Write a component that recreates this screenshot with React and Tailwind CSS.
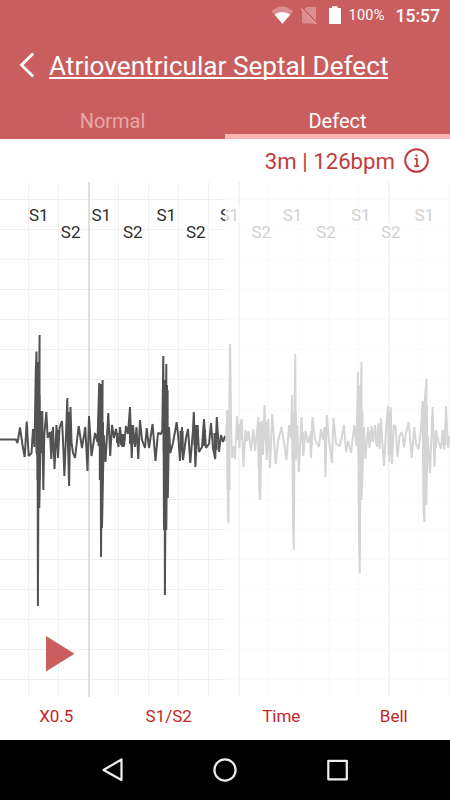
const MURMUR = [
	[0, 439.5], [16, 439.5], [17.5, 443], [20, 427.5], [22.5, 445], [24.7, 457], [26.7, 421.5], [28.7, 456], [31.5, 453], [33, 429],
	[34.5, 447], [35.8, 370], [36.5, 351.5], [37, 455], [37.5, 362], [37.9, 606], [38.6, 440], [39.6, 335], [39.3, 508], [41, 411],
	[41.8, 452], [42.3, 411], [43.3, 490], [44.3, 435], [46.3, 412], [47.7, 438], [50, 432], [51.3, 459], [53, 427], [54.5, 469],
	[56.5, 425], [58, 458], [59.5, 428], [62, 421], [63, 440], [64.4, 476], [66.2, 430], [67.3, 398], [68, 445], [69.1, 486],
	[70.5, 407], [71.5, 442], [73, 453], [75, 458], [78.7, 426], [82, 448], [85.3, 427], [87.5, 471], [89, 416], [91.5, 456],
	[95, 433], [97.5, 442], [99.2, 383], [100, 450], [100.6, 384], [101, 557], [102.6, 380], [102, 528], [103.8, 435], [105.5, 462],
	[108.3, 413], [110.2, 456], [112, 425], [114, 438], [116, 429], [118.5, 447], [120, 427], [122, 446], [124, 446], [126, 426],
	[128, 434], [130, 407], [131.7, 458], [133, 425], [135, 447], [136.5, 427], [138.3, 459], [140, 420], [142, 440], [145, 448],
	[146.7, 428], [149, 448], [152.6, 424], [155.5, 461], [158, 433], [161, 434], [162.3, 430], [163.3, 356], [164, 530], [164.6, 380],
	[164.9, 595], [166.3, 364], [166.3, 530], [167.6, 390], [167.8, 498], [169, 427], [170.3, 453], [173, 443], [176.7, 422], [178.5, 440],
	[180, 461], [182, 427], [183, 460], [186, 438], [188, 429], [190.3, 463], [193, 430], [193.8, 412], [195.4, 467], [197.5, 425],
	[199, 452], [202, 447], [204, 419], [206, 448], [209, 444], [211, 423], [213, 448], [215.2, 459], [216.8, 417], [219, 452],
	[221, 435], [223, 442], [225, 436], [226.5, 441], [227.2, 410], [227.8, 505], [228.4, 523], [229.2, 409], [230.1, 344], [231.2, 435],
	[232.2, 458], [233.5, 446], [235, 459], [237, 416], [239.5, 448], [240.5, 424], [241.8, 419], [243.4, 467], [245.5, 430], [247, 441],
	[248.5, 431], [251, 451], [253.3, 429], [255, 451], [258.3, 417], [259.3, 490], [260.2, 500], [261.8, 421], [263, 455], [264.5, 405],
	[266.7, 460], [268.3, 419], [270, 468], [272.2, 414], [275.7, 464], [278, 442], [281.5, 427], [284, 442], [286.5, 460], [289, 425],
	[290.8, 438], [292.1, 395], [293, 520], [293.8, 550], [294.7, 400], [295.3, 354], [295.8, 460], [297.3, 425], [298.8, 472], [301.5, 417],
	[303.3, 456], [305.5, 431], [308, 443], [310, 435], [311, 458], [312.5, 417], [315, 440], [319, 447], [321, 429], [323, 440],
	[324.5, 427], [325.4, 477], [326.8, 415], [329, 440], [332, 463], [333.5, 418], [336, 444], [340, 446], [344, 425], [346, 452],
	[348, 441], [351, 453], [354.3, 425], [356.5, 446], [358, 372], [359, 540], [359.8, 573], [360.5, 410], [361.5, 362], [361.5, 500],
	[362.8, 464], [364, 427], [365.5, 459], [368, 427], [369.5, 448], [371.5, 426], [373, 442], [375, 425], [377, 447], [378.3, 423],
	[379.5, 449], [381, 418], [382.5, 445], [384, 466], [386, 430], [388, 406], [389.3, 462], [390.7, 407], [392, 464], [393.8, 425],
	[395.5, 426], [397.5, 457], [399.5, 436], [402, 432], [404, 447], [406, 433], [408.7, 422], [411.7, 458], [414.3, 427], [416, 444],
	[418.5, 449], [421, 430], [422.6, 401], [423.5, 510], [424.5, 522], [424.8, 400], [426.5, 379], [426.3, 505], [427.6, 435], [430, 473],
	[432.6, 407], [434.5, 467], [436, 430], [438.5, 442], [441, 449], [442.5, 430], [444.3, 450], [446, 406], [448, 448], [450, 436],
];

// stretches where the samples are too dense to separate: x1, x2, top, bottom
const DENSE = [
	[35.5, 42.5, 412, 453], [36.5, 40.5, 395, 480], [51, 54, 431, 450], [56.5, 59.5, 430, 441],
	[66.5, 71, 412, 442], [97.5, 104, 422, 446], [98.8, 102.8, 396, 480], [116, 118.5, 433, 443], [120, 124, 434, 445],
	[129, 133.5, 425, 444], [162.8, 169.5, 428, 452], [163.3, 168, 385, 498], [179.5, 183.5, 431, 446],
	[193.5, 198.5, 425, 445], [203, 206, 430, 446], [213.5, 217.5, 433, 450], [226.5, 230.5, 411, 490], [237, 242, 424, 440],
	[257.5, 262, 422, 468], [263.5, 268.5, 422, 440], [291.5, 297, 412, 458], [301.5, 304, 432, 445], [310, 313, 431, 445],
	[357.5, 363.5, 411, 458], [358.3, 361.5, 385, 490], [368, 371.5, 432, 442], [375, 381, 433, 443], [387.5, 391.5, 412, 455],
	[422, 428, 405, 440], [423, 427, 403, 490], [434.5, 437, 434, 448], [442, 446.5, 433, 445],
];

const VERTICALS = [28.5, 58.5, 118.5, 148.5, 178.5, 208.5, 268.5, 298.5, 328.5, 358.5, 418.5, 448.5];
const SECONDS = [89, 239, 389];
const HORIZONTALS = Array.from({ length: 17 }, (_, i) => 199.5 + i * 30);

const PLAYED_LABELS = [
	["S1", 29, 221], ["S1", 91.5, 221], ["S1", 156.5, 221], ["S1", 220, 221],
	["S2", 60.8, 238], ["S2", 123, 238], ["S2", 185.9, 238],
];

const UPCOMING_LABELS = [
	["S1", 219.5, 221], ["S1", 282.7, 221], ["S1", 351, 221], ["S1", 414.5, 221],
	["S2", 251.5, 238], ["S2", 316.2, 238], ["S2", 380.9, 238],
];

const Trace = ({ labels, grid, second, line, text, clip }) => (
	<g clipPath={clip}>
		{HORIZONTALS.map((y) => (
			<line key={y} x1="0" x2="450" y1={y} y2={y} stroke={grid} />
		))}
		{VERTICALS.map((x) => (
			<line key={x} x1={x} x2={x} y1="182" y2="697" stroke={grid} />
		))}
		{SECONDS.map((x) => (
			<line key={x} x1={x} x2={x} y1="182" y2="697" stroke={second} strokeWidth="1.7" />
		))}
		{labels.map(([name, x, y]) => (
			<g key={`${name}-${x}`}>
				<rect x={x} y={y - 15} width="20" height="17" fill="#fff" />
				<text x={x} y={y} fill={text} fontSize="17" fontFamily="Roboto, sans-serif">
					{name}
				</text>
			</g>
		))}
		{DENSE.map(([x1, x2, top, bottom]) => (
			<rect key={`${x1}-${top}`} x={x1} y={top} width={x2 - x1} height={bottom - top} fill={line} />
		))}
		<polyline points={MURMUR.map((p) => p.join(",")).join(" ")} fill="none" stroke={line} strokeWidth="2" strokeLinejoin="bevel" />
	</g>
);

const Phonocardiogram = () => (
	<svg className="block h-[515px] w-[450px]" viewBox="0 182 450 515">
		<defs>
			<clipPath id="played">
				<rect x="0" y="182" width="225.5" height="515" />
			</clipPath>
			<clipPath id="upcoming">
				<rect x="225.5" y="182" width="224.5" height="515" />
			</clipPath>
		</defs>
		<Trace labels={PLAYED_LABELS} grid="#f0f0f0" second="#dadada" line="#525252" text="#2c2c2c" clip="url(#played)" />
		<Trace labels={UPCOMING_LABELS} grid="#fafafa" second="#f3f3f3" line="#d5d5d5" text="#d0d0d0" clip="url(#upcoming)" />
		<path d="M46 636v35.5L74.5 653.7z" fill="#ca5e5e" />
	</svg>
);

const StatusBar = () => (
	<div className="flex h-8 items-center justify-end pr-[10px] text-white">
		<svg className="h-5 w-[78px]" viewBox="271 6 78 20">
			<path d="M271.5 11.3Q282.3 1.5 293.2 11.3L282.4 23.7z" fill="#fff" opacity=".3" />
			<path d="M274.5 14.6Q282.4 9.3 290.3 14.6L282.4 23.7z" fill="#fff" />
			<path d="M306.5 7H316v16.5h-14V11.5z" fill="#fff" opacity=".3" />
			<path d="M301.5 8.2L317 23.5" stroke="#ca5e5e" strokeWidth="2.4" />
			<path d="M301 8.5L316.3 24" stroke="#e2a5a5" strokeWidth="1.1" />
			<path d="M329 8h3V6.2h5.7V8h3.3v16h-12z" fill="#fff" />
		</svg>
		<span className="w-[47px] text-[14.5px] tracking-[0.2px]">100%</span>
		<span className="text-[17.5px] font-medium leading-8">15:57</span>
	</div>
);

const Header = () => (
	<header className="flex h-[139px] flex-col bg-[#ca5e5e]">
		<StatusBar />
		<div className="flex h-[70px] shrink-0 items-center pl-[18px] text-white">
			<svg className="mr-[13px] mb-1 h-7 w-[18px]" viewBox="18 51 18 28">
				<path d="M33.2 53.5L21.5 65l11.7 11.5" fill="none" stroke="#fff" strokeWidth="2.9" />
			</svg>
			<h1 className="border-b-2 border-white text-[26.15px] leading-[22px]">Atrioventricular Septal Defect</h1>
		</div>
		<div className="grid h-[37px] shrink-0 grid-cols-2 text-center text-[20px] leading-[39px]">
			<span className="h-[37px] text-[#e7a7a7]">Normal</span>
			<span className="h-[37px] border-b-[5px] border-[#ffb4b4] text-white">Defect</span>
		</div>
	</header>
);

const SystemNav = () => (
	<nav className="flex h-[60px] items-center justify-center bg-black">
		<svg className="h-[60px] w-[450px]" viewBox="0 740 450 60" fill="none" stroke="#eee" strokeWidth="2.2" strokeLinejoin="round">
			<path d="M103.5 770L121.5 759.5V780z" />
			<circle cx="225" cy="770" r="10.6" />
			<rect x="328.3" y="760.8" width="18.5" height="18.5" />
		</svg>
	</nav>
);

const App = () => (
	<div className="flex h-[800px] w-[450px] flex-col overflow-hidden bg-white font-[Roboto,sans-serif]">
		<Header />
		<div className="flex h-[43px] items-center justify-end gap-[9px] pr-[21px] text-[#c43b3b]">
			<span className="pt-[3px] text-[22.2px]">3m | 126bpm</span>
			<svg className="size-[25px]" viewBox="0 0 25 25" fill="none" stroke="currentColor">
				<circle cx="12.5" cy="12.5" r="11.3" strokeWidth="2" />
				<path d="M10.5 10.8h2.4v7M10.3 18.2h4.8" strokeWidth="1.7" />
				<path d="M11.5 7.5h2" strokeWidth="2" />
			</svg>
		</div>
		<Phonocardiogram />
		<div className="grid h-[43px] grid-cols-4 text-center text-[17px] leading-[39px] text-[#c52626]">
			<span>X0.5</span>
			<span>S1/S2</span>
			<span>Time</span>
			<span>Bell</span>
		</div>
		<SystemNav />
	</div>
);

export default App;
